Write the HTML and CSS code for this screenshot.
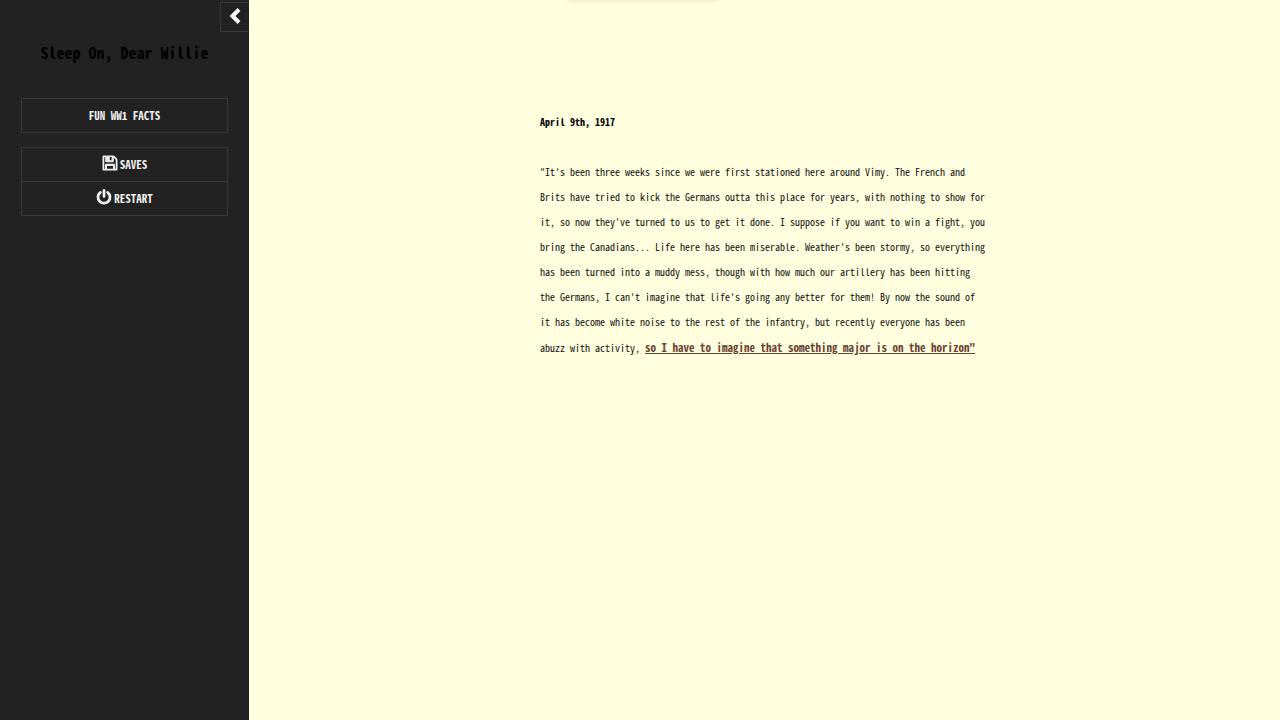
FILE: index.html
```html
<!DOCTYPE html>
<html lang="en">
<head>
    <meta charset="UTF-8">
    <meta name="viewport" content="width=device-width, initial-scale=1.0">
    <title>Sleep On, Dear Willie</title>
    <link rel="stylesheet" href="styles.css">
</head>
<body>
    <aside id="ui-bar">
        <div class="ui-bar-tray">
            <button id="ui-bar-toggle" type="button" aria-label="Toggle the UI bar">
                <svg viewBox="0 0 16 18"><path d="M12 2.5 L5.5 9 L12 15.5" /></svg>
            </button>
        </div>
        <div class="ui-bar-body">
            <h1 id="story-title">Sleep On, Dear Willie</h1>
            <ul class="menu">
                <li><button type="button">FUN WW1 FACTS</button></li>
            </ul>
            <ul class="menu">
                <li><button type="button">
                    <svg class="icon" viewBox="0 0 16 16"><path fill-rule="evenodd" d="M1.5 0.5 H11 Q12 0.5 12.7 1.2 L14.8 3.3 Q15.5 4 15.5 5 V14.5 Q15.5 15.5 14.5 15.5 H1.5 Q0.5 15.5 0.5 14.5 V1.5 Q0.5 0.5 1.5 0.5 Z M2.3 2.3 V13.7 H3 V10 Q3 8.7 4.2 8.7 H11.8 Q13 8.7 13 10 V13.7 H13.7 V5 L11.8 2.8 V6 Q11.8 7.3 10.5 7.3 H4.5 Q3.2 7.3 3.2 6 V2.3 Z M7.8 2 V5.2 H9.6 V2 Z M5 10.9 V13.7 H11 V10.9 Z" /></svg>
                    <span>SAVES</span>
                </button></li>
                <li><button type="button">
                    <svg class="icon power" viewBox="0 0 16 16"><path d="M4.4 3.4 A6 6 0 1 0 11.6 3.4 M8 1.4 V7.4" /></svg>
                    <span>RESTART</span>
                </button></li>
            </ul>
        </div>
    </aside>
    <main id="story">
        <article class="passage">
            <h2>April 9th, 1917</h2>
            <p>"It's been three weeks since we were first stationed here around Vimy. The French and Brits have tried to kick the Germans outta this place for years, with nothing to show for it, so now they've turned to us to get it done. I suppose if you want to win a fight, you bring the Canadians... Life here has been miserable. Weather's been stormy, so everything has been turned into a muddy mess, though with how much our artillery has been hitting the Germans, I can't imagine that life's going any better for them! By now the sound of it has become white noise to the rest of the infantry, but recently everyone has been abuzz with activity, <a href="#horizon">so I have to imagine that something major is on the horizon"</a></p>
        </article>
    </main>
</body>
</html>
```
FILE: styles.css
```css
* {
    box-sizing: border-box;
}
body {
    margin: 0;
    min-height: 100vh;
    display: flex;
    background-color: #ffffdf;
    color: #111;
    /* half-width latin gives the typewriter look */
    font-family: "Noto Sans CJK JP", "Liberation Mono", monospace;
    font-feature-settings: "hwid";
    font-variant-ligatures: none;
    font-size: 10px;
}
#ui-bar {
    flex: 0 0 249px;
    background-color: #222;
}
.ui-bar-tray {
    display: flex;
    justify-content: flex-end;
    padding-top: 2px;
}
#ui-bar-toggle {
    width: 29px;
    height: 30px;
    padding: 0 0 2px;
    display: flex;
    align-items: center;
    justify-content: center;
    background-color: transparent;
    border: 1px solid #3a3a3a;
    border-right: none;
    cursor: pointer;
}
#ui-bar-toggle svg {
    width: 16px;
    height: 18px;
    fill: none;
    stroke: #fff;
    stroke-width: 4;
}
.ui-bar-body {
    padding: 8px 21px;
}
#story-title {
    margin: 0 0 34px;
    font-size: 16px;
    font-weight: bold;
    line-height: 24px;
    text-align: center;
    color: #000;
}
.menu {
    list-style: none;
    margin: 0 0 14px;
    padding: 0;
    border: 1px solid #3a3a3a;
}
.menu li + li {
    border-top: 1px solid #3a3a3a;
}
.menu button {
    width: 100%;
    height: 33px;
    padding: 0 0 1px;
    display: flex;
    align-items: center;
    justify-content: center;
    gap: 2px;
    background-color: transparent;
    border: none;
    color: #eee;
    font: inherit;
    font-feature-settings: inherit;
    font-size: 11px;
    font-weight: bold;
    cursor: pointer;
}
.icon {
    width: 16px;
    height: 16px;
    margin-bottom: 2px;
    fill: #eee;
}
.icon.power {
    fill: none;
    stroke: #eee;
    stroke-width: 2.8;
    stroke-linecap: round;
}
#story {
    position: relative;
    flex: 1;
    padding: 109px 20px 40px;
    overflow: hidden;
}
/* closed dialog, only its shadow shows at the top */
#story::before {
    content: "";
    position: absolute;
    top: -10px;
    left: 319px;
    width: 150px;
    height: 10px;
    box-shadow: 0 0 4px rgba(0, 0, 0, 0.15);
}
.passage {
    max-width: 449px;
    margin: 0 auto;
    line-height: 2.5;
}
.passage h2 {
    margin: 0 0 25px;
    font-size: 10px;
    font-weight: bold;
    color: #000;
}
.passage p {
    margin: 0;
}
.passage a {
    color: #6b4232;
    font-size: 11px;
    font-weight: bold;
}
```
